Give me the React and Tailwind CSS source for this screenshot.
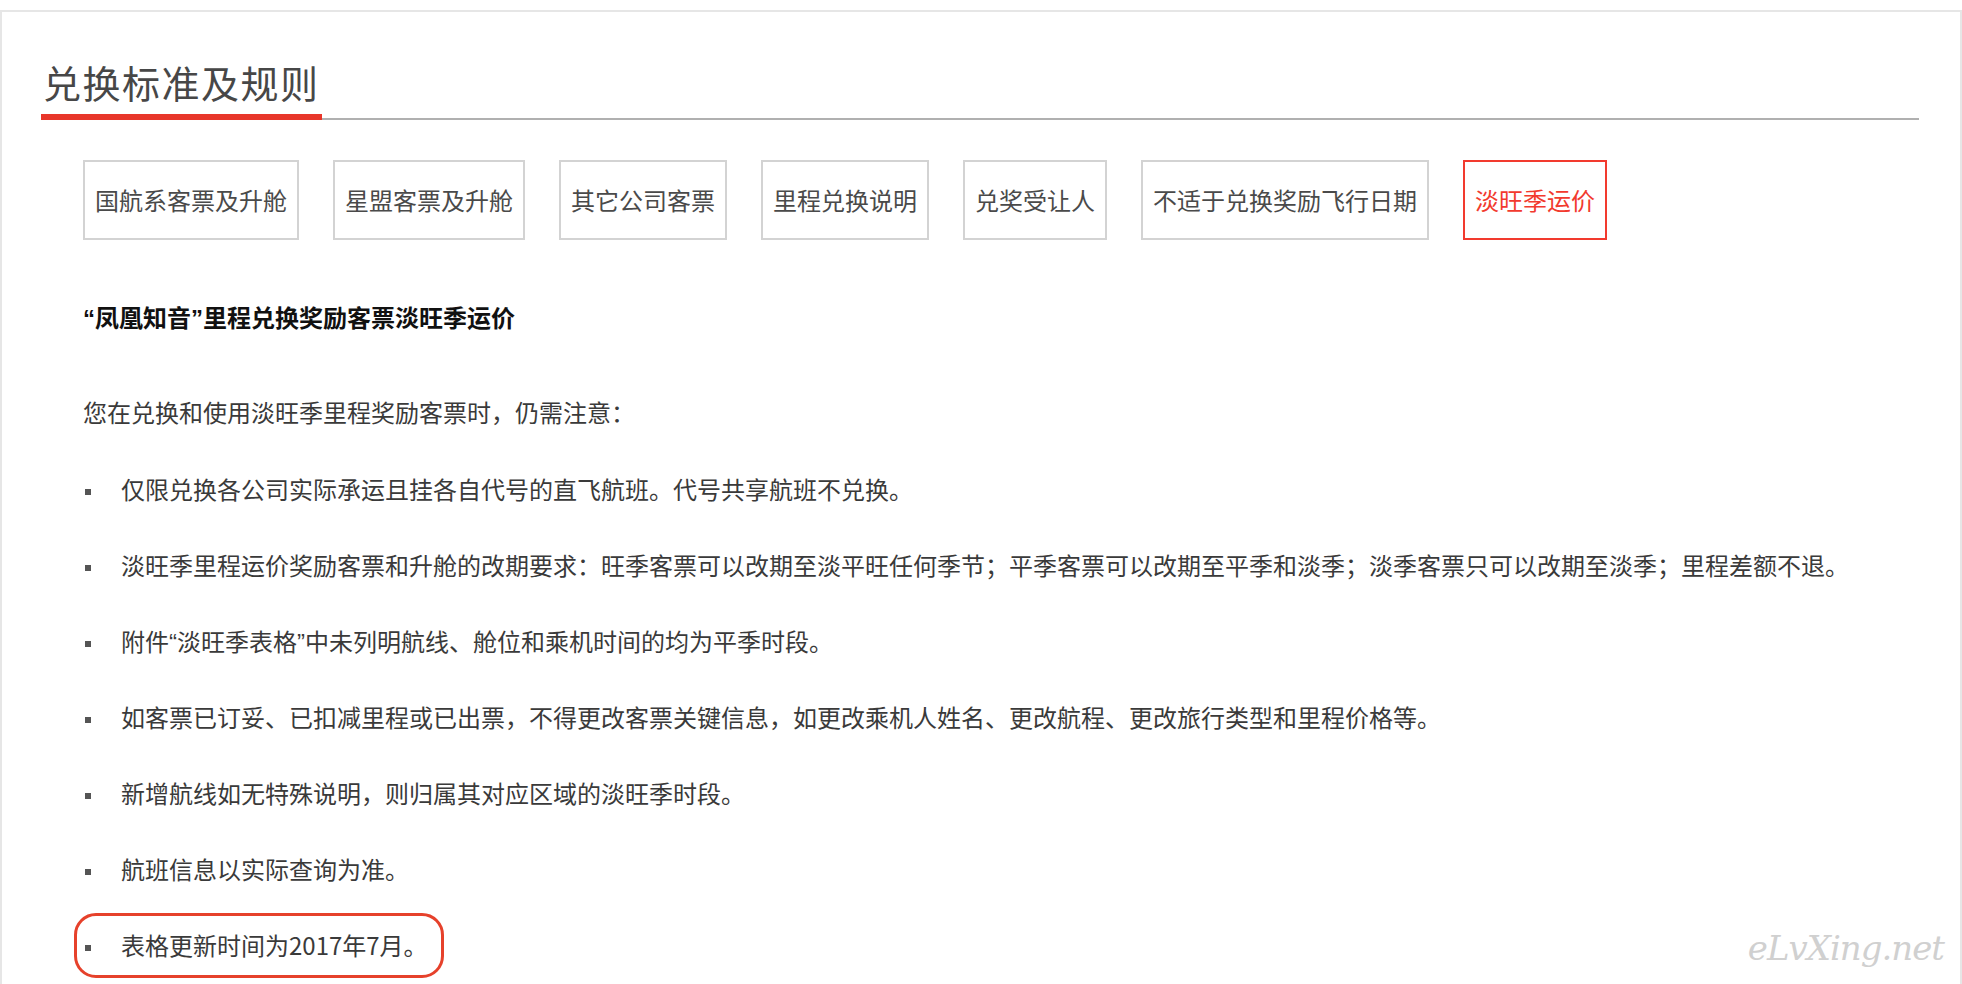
import React from "react";

const tabs = [
  "国航系客票及升舱",
  "星盟客票及升舱",
  "其它公司客票",
  "里程兑换说明",
  "兑奖受让人",
  "不适于兑换奖励飞行日期",
  "淡旺季运价",
];

const Q = ({ children }) => (
  <span className="font-['Liberation_Sans',sans-serif] leading-none">{children}</span>
);

const items = [
  "仅限兑换各公司实际承运且挂各自代号的直飞航班。代号共享航班不兑换。",
  "淡旺季里程运价奖励客票和升舱的改期要求：旺季客票可以改期至淡平旺任何季节；平季客票可以改期至平季和淡季；淡季客票只可以改期至淡季；里程差额不退。",
  <>
    附件<Q>“</Q>淡旺季表格<Q>”</Q>中未列明航线、舱位和乘机时间的均为平季时段。
  </>,
  "如客票已订妥、已扣减里程或已出票，不得更改客票关键信息，如更改乘机人姓名、更改航程、更改旅行类型和里程价格等。",
  "新增航线如无特殊说明，则归属其对应区域的淡旺季时段。",
  "航班信息以实际查询为准。",
  "表格更新时间为2017年7月。",
];

export default function App() {
  return (
    <div className="w-[1962px] h-[984px] bg-white overflow-hidden pt-[10px] font-['Noto_Sans_CJK_SC',sans-serif] relative">
      <div className="h-full border-2 border-b-0 border-[#e6e6e6] pl-[39px] pr-[41px]">
        {/* Title */}
        <div className="mt-[47px] flex items-end border-b-2 border-[#b0b0b0]">
          <span className="inline-block px-[2px] pb-[9px] -mb-[2px] border-b-[6px] border-[#e8362a] text-[38px] leading-[46px] tracking-[1.5px] text-[#474747]">
            兑换标准及规则
          </span>
        </div>

        <div className="pl-[42px]">
          {/* Tabs */}
          <div className="mt-[40px] flex gap-[34px]">
            {tabs.map((t, i) => {
              const active = i === tabs.length - 1;
              return (
                <div
                  key={t}
                  className={
                    active
                      ? "h-[80px] px-[10px] flex items-center border-2 border-[#f23a2e] text-[#f23a2e] text-[24px] leading-[32px]"
                      : "h-[80px] px-[10px] flex items-center border-2 border-[#d3d3d3] text-[#4a4a4a] text-[24px] leading-[32px]"
                  }
                >
                  {t}
                </div>
              );
            })}
          </div>

          {/* Subtitle */}
          <div className="mt-[61px] h-[32px] text-[24px] leading-[32px] font-bold text-[#111111] whitespace-nowrap">
            <Q>“</Q>凤凰知音<Q>”</Q>里程兑换奖励客票淡旺季运价
          </div>

          {/* Intro */}
          <div className="mt-[63px] h-[32px] text-[24px] leading-[32px] text-[#3a3a3a]">
            您在兑换和使用淡旺季里程奖励客票时，仍需注意：
          </div>

          {/* List */}
          <ul className="mt-[45px] flex flex-col gap-[44px]">
            {items.map((t, i) => (
              <li
                key={i}
                className="relative h-[32px] flex items-center text-[24px] leading-[32px] text-[#3a3a3a] whitespace-nowrap"
              >
                <span className="w-[6px] h-[6px] bg-[#555555] ml-[2px] mr-[30px] mt-[5px] shrink-0" />
                <span>{t}</span>
                {i === items.length - 1 && (
                  <span className="absolute left-[-9px] top-[-16px] w-[370px] h-[65px] rounded-[22px] border-[3px] border-[#e6412b]" />
                )}
              </li>
            ))}
          </ul>
        </div>
      </div>

      {/* Watermark */}
      <div className="absolute right-[18px] bottom-[14px] text-[34px] leading-[44px] italic text-[#d0d0d0] font-['DejaVu_Serif',serif] tracking-[-1px]">
        eLvXing.net
      </div>
    </div>
  );
}
